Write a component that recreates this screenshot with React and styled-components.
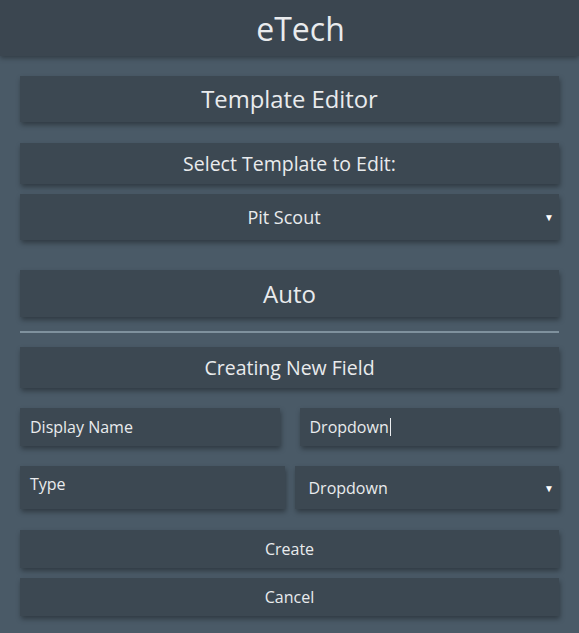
import React from "react";
import styled, { createGlobalStyle } from "styled-components";

const GlobalStyle = createGlobalStyle`
  html, body {
    margin: 0;
    padding: 0;
    background: #4a5a67;
    font-family: "Open Sans", "Noto Sans", sans-serif;
    color: #e9ebed;
  }
  * { box-sizing: border-box; }
`;

const Page = styled.div`
  min-height: 633px;
  background: #4a5a67;
`;

const Header = styled.header`
  height: 56px;
  background: #3b4650;
  box-shadow: 0 2px 5px rgba(0, 0, 0, 0.35);
  display: flex;
  align-items: center;
  justify-content: center;
  font-size: 32px;
  padding-left: 22px;
  position: relative;
  z-index: 1;
`;

const Main = styled.main`
  padding: 20px 20px 0;
  display: flex;
  flex-direction: column;
`;

const Card = styled.div`
  background: #3c4852;
  box-shadow: 1px 3px 5px rgba(0, 0, 0, 0.35);
  height: ${(p) => p.h}px;
  margin-top: ${(p) => p.mt || 0}px;
  display: flex;
  align-items: center;
  justify-content: center;
  font-size: ${(p) => p.size}px;
`;

const SelectBox = styled(Card)`
  position: relative;
  padding-right: 11px;
`;

const Arrow = styled.span`
  position: absolute;
  right: 5px;
  top: 50%;
  transform: translateY(-50%);
  font-size: 10px;
  color: #ffffff;
`;

const Divider = styled.hr`
  margin: 14px 0 0;
  border: none;
  height: 2px;
  background: #7f919d;
`;

const Row = styled.div`
  display: grid;
  grid-template-columns: 1fr 1fr;
  column-gap: ${(p) => p.gap}px;
  margin-top: ${(p) => p.mt}px;
`;

const Field = styled.div`
  position: relative;
  background: #3c4852;
  box-shadow: 1px 3px 5px rgba(0, 0, 0, 0.35);
  height: ${(p) => p.h}px;
  padding: ${(p) => p.pt || 0}px 10px 0 ${(p) => p.pl || 10}px;
  display: flex;
  align-items: ${(p) => (p.top ? "flex-start" : "center")};
  font-size: 16px;
`;

const Caret = styled.span`
  display: inline-block;
  width: 1px;
  height: 18px;
  background: #eceef0;
  margin-left: 1px;
`;

const Button = styled(Card)`
  cursor: pointer;
`;

export default function App() {
  return (
    <Page>
      <GlobalStyle />
      <Header>eTech</Header>
      <Main>
        <Card h={46} size={23.8}>Template Editor</Card>
        <Card h={41} mt={21} size={19.5}>Select Template to Edit:</Card>
        <SelectBox h={46} mt={10} size={18}>
          Pit Scout
          <Arrow>▼</Arrow>
        </SelectBox>
        <Card h={47} mt={30} size={24}>Auto</Card>
        <Divider />
        <Card h={41} mt={14} size={19.5}>Creating New Field</Card>
        <Row gap={20} mt={20}>
          <Field h={38}>Display Name</Field>
          <Field h={38}>
            Dropdown
            <Caret />
          </Field>
        </Row>
        <Row gap={10} mt={20}>
          <Field h={43} top pt={7}>Type</Field>
          <Field h={43} pl={14}>
            Dropdown
            <Arrow>▼</Arrow>
          </Field>
        </Row>
        <Button h={38} mt={21} size={16}>Create</Button>
        <Button h={38} mt={10} size={16}>Cancel</Button>
      </Main>
    </Page>
  );
}
